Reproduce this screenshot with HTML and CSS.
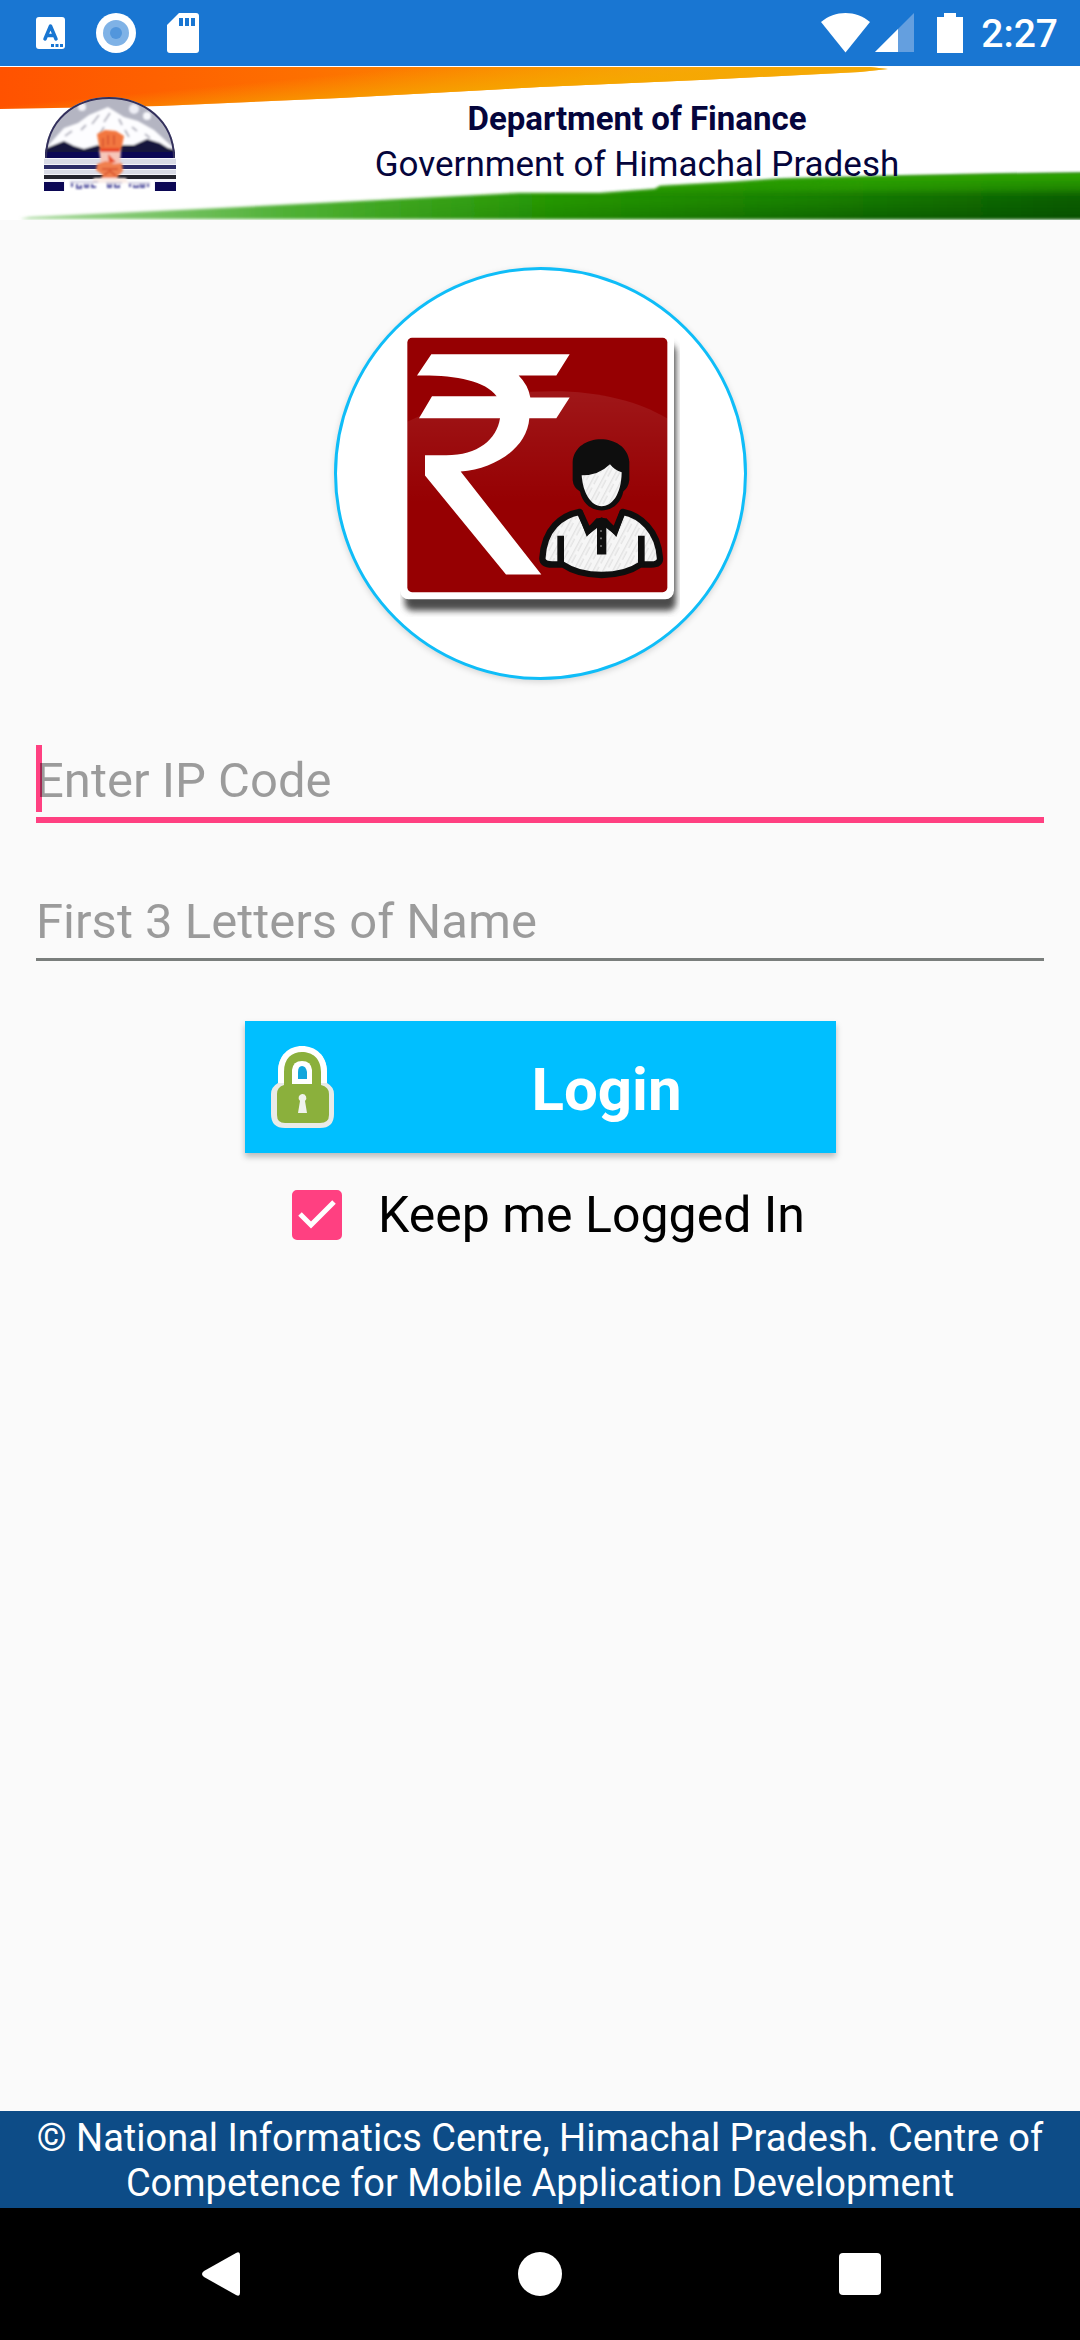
FILE: index.html
```html
<!DOCTYPE html>
<html lang="en">
<head>
    <meta charset="UTF-8">
    <meta name="viewport" content="width=device-width, initial-scale=1.0">
    <title>Login</title>
    <link rel="stylesheet" href="styles.css">
</head>
<body>
    <div class="status-bar">
        <div class="status-left">
            <svg width="29" height="32" viewBox="0 0 29 32">
                <rect width="29" height="32" rx="3" fill="#fff"/>
                <path d="M9 22 L14.500 9 L20 22 M11 18.500 H18" fill="none" stroke="#1976d2" stroke-width="3.500" stroke-linecap="round" stroke-linejoin="round"/>
                <path d="M15 27h3v3h-3z M19.500 27h3v3h-3z M24 27h3v3h-3z" fill="#1976d2"/>
            </svg>
            <svg width="40" height="40" viewBox="0 0 40 40">
                <circle cx="20" cy="20" r="20" fill="#fff"/>
                <circle cx="20" cy="20" r="13" fill="#7fb2e6"/>
                <circle cx="20" cy="20" r="6" fill="#5296dc"/>
            </svg>
            <svg width="32" height="40" viewBox="0 0 32 40">
                <path d="M12 0H29a3 3 0 0 1 3 3V37a3 3 0 0 1-3 3H3a3 3 0 0 1-3-3V12z" fill="#fff"/>
                <path d="M12 5h4v8h-4z M18 5h4v8h-4z M24 5h4v8h-4z" fill="#1976d2"/>
            </svg>
        </div>
        <div class="status-right">
            <svg width="49" height="40" viewBox="0 0 49 40">
                <path d="M0 9C14-3 35-3 49 9L24.500 39.500z" fill="#fff"/>
            </svg>
            <svg class="signal" width="39" height="40" viewBox="0 0 39 40">
                <path d="M39 0V39H0z" fill="#649fdf"/>
                <path d="M23 16V39H0z" fill="#fff"/>
            </svg>
            <svg class="battery" width="26" height="40" viewBox="0 0 26 40">
                <path d="M7 0H19V4H26V40H0V4H7z" fill="#fff"/>
            </svg>
            <span class="clock">2:27</span>
        </div>
    </div>

    <header class="banner">
        <svg class="banner-bg" viewBox="0 0 1080 154" preserveAspectRatio="none">
            <defs>
                <linearGradient id="saffron" x1="0" x2="1" y1="0" y2="0">
                    <stop offset="0" stop-color="#ff5200"/>
                    <stop offset=".35" stop-color="#fd7000"/>
                    <stop offset=".65" stop-color="#fb9200"/>
                    <stop offset="1" stop-color="#fbc050"/>
                </linearGradient>
                <linearGradient id="saffronEdge" gradientUnits="userSpaceOnUse" x1="300" y1="12" x2="303" y2="44">
                    <stop offset="0" stop-color="#f5a800" stop-opacity="0"/>
                    <stop offset="1" stop-color="#f5a800" stop-opacity=".9"/>
                </linearGradient>
                <linearGradient id="green" x1="0" x2="1" y1="0" y2="0">
                    <stop offset="0" stop-color="#a5d89a"/>
                    <stop offset=".25" stop-color="#4fb035"/>
                    <stop offset=".5" stop-color="#279a02"/>
                    <stop offset=".75" stop-color="#1c8400"/>
                    <stop offset="1" stop-color="#0a5c00"/>
                </linearGradient>
                <linearGradient id="greenShade" x1="0" x2="0" y1="0" y2="1">
                    <stop offset="0" stop-color="#2fa800"/>
                    <stop offset=".35" stop-color="#2fa800" stop-opacity=".5"/>
                    <stop offset=".6" stop-color="#064a00" stop-opacity=".1"/>
                    <stop offset="1" stop-color="#064000" stop-opacity=".5"/>
                </linearGradient>
                <linearGradient id="fadeIn" x1="0" x2="1" y1="0" y2="0">
                    <stop offset=".3" stop-color="#000"/>
                    <stop offset=".8" stop-color="#fff"/>
                </linearGradient>
                <mask id="shadeMask"><rect width="1080" height="154" fill="url(#fadeIn)"/></mask>
                <filter id="soft" x="-5%" y="-20%" width="110%" height="140%"><feGaussianBlur stdDeviation="1.500"/></filter>
            </defs>
            <rect width="1080" height="154" fill="#fff"/>
            <path d="M0 1H870L888 3L860 6L700 14L540 21L340 32L160 40L0 43z" fill="url(#saffron)"/>
            <path d="M0 1H870L888 3L860 6L700 14L540 21L340 32L160 40L0 43z" fill="url(#saffronEdge)"/>
            <path d="M20 153L30 151L200 143L380 134L520 127L600 127L655 123L660 120L735 116L780 113L900 110L1000 108L1090 107V153z" fill="url(#green)" filter="url(#soft)"/>
            <g mask="url(#shadeMask)">
                <path d="M20 153L30 151L200 143L380 134L520 127L600 127L655 123L660 120L735 116L780 113L900 110L1000 108L1090 107V153z" fill="url(#greenShade)" filter="url(#soft)"/>
            </g>
        </svg>
        <svg class="emblem" viewBox="0 0 132 95">
            <defs>
                <clipPath id="dome"><path d="M1 62C1 24 30 1 65 1S131 24 131 62z"/></clipPath>
                <filter id="smudge" x="-10%" y="-10%" width="120%" height="120%"><feGaussianBlur stdDeviation=".8"/></filter>
            </defs>
            <rect y="62" width="132" height="33" fill="#f4f4fa"/>
            <g clip-path="url(#dome)">
                <rect width="132" height="62" fill="#b4b5c2"/>
                <g filter="url(#smudge)">
                    <path d="M0 54L20 32L34 27L45 19L64 11L80 21L94 25L110 34L132 54V62H0z" fill="#fdfdff"/>
                    <circle cx="38" cy="11" r="4" fill="#f3f3f8"/>
                    <circle cx="90" cy="13" r="5" fill="#eeeef5"/>
                    <circle cx="103" cy="20" r="4" fill="#f8f8fc"/>
                    <path d="M55 19l-7 9M66 17l-6 9M42 29l-5 5M75 23l3 6M88 31l5 4M60 31l-4 7M101 38l5 4M28 35l-7 5M81 34l4 7" stroke="#b4b4c0" stroke-width="2"/>
                    <path d="M0 53L10 49L20 45L30 50L40 53L54 49H80L90 49L103 43L116 47L124 52L132 54V62H0z" fill="#14143c"/>
                </g>
                <path d="M0 56H132V62H0z" fill="#0b0754"/>
                <path d="M1 62C1 24 30 1 65 1S131 24 131 62" fill="none" stroke="#33305c" stroke-width="4"/>
            </g>
            <path d="M0 63H132V68H0z M0 74H132V78H0z" fill="#d9dbe6"/>
            <path d="M0 69H132V73H0z" fill="#2c2c68"/>
            <path d="M0 79H132V83H0z" fill="#24242e"/>
            <path d="M0 86H20V95H0z M111 86H132V95H111z" fill="#0b0754"/>
            <path d="M21 84H110V95H21z" fill="#fff"/>
            <g filter="url(#smudge)">
                <path d="M53 38L61 34L72 35L80 40L77 55H56z" fill="#f27740"/>
                <path d="M55 54H77L76 69H57z" fill="#f6c6b9"/>
                <path d="M56 52H76V56H56z M64 58l8 8-7 1z" fill="#e94b25"/>
                <path d="M53 68L62 65L70 68L78 67L79 75L73 81L76 84H55L59 79L52 74z" fill="#f0804f"/>
                <path d="M50 82H82L84 87H48z" fill="#fbeee8"/>
                <path d="M64 39V49M70 39V49M59 42V51M58 73H74M60 79L66 75L72 80" fill="none" stroke="#dc5830" stroke-width="2"/>
                <path d="M26 86H54M62 87H78M84 87H106" stroke="#a09ec4" stroke-width="1"/>
                <path d="M28 87v4M33 88v4h4v-3M41 88v3h3v-3M48 88v3h4M64 88v3h3v-3M71 88v3h4v-2M86 88v3M90 89v2h4v-2M97 88v3h3v-3M104 88v3" fill="none" stroke="#5552a0" stroke-width="2"/>
            </g>
        </svg>
        <div class="banner-text">
            <h1>Department of Finance</h1>
            <p>Government of Himachal Pradesh</p>
        </div>
    </header>

    <main class="content">
        <div class="logo">
            <svg width="280" height="287" viewBox="240 240 840 860">
                <defs>
                    <linearGradient id="gloss" x1="0" x2="0" y1="0" y2="1">
                        <stop offset="0" stop-color="#fff" stop-opacity=".09"/>
                        <stop offset="1" stop-color="#fff" stop-opacity="0"/>
                    </linearGradient>
                    <filter id="drop"><feGaussianBlur stdDeviation="9"/></filter>
                    <pattern id="pencil" width="26" height="40" patternUnits="userSpaceOnUse" patternTransform="rotate(28)">
                        <rect width="26" height="40" fill="#f6f6f6"/>
                        <path d="M5 0V40M15 6V34" stroke="#e2e2e2" stroke-width="4"/>
                    </pattern>
                </defs>
                <rect x="254" y="282" width="814" height="800" rx="24" fill="#4c4c4c" filter="url(#drop)"/>
                <rect x="240" y="240" width="822" height="807" rx="26" fill="#fff"/>
                <rect x="262" y="263" width="780" height="763" rx="14" fill="#960002"/>
                <path d="M262 515C400 445 560 423 700 423C840 423 960 455 1042 505V760H262z" fill="url(#gloss)"/>
                <path d="M334 312H749L709 376H596Q625 405 631 442H749L709 504H628C622 590 530 656 422 664L664 973H558L315 676V615H370C470 618 530 570 540 504H297L336 438H530C495 390 400 374 291 376z" fill="#fff"/>
                <!-- employee -->
                <path d="M779 785C725 795 672 835 667 925Q668 944 700 943H728C790 985 900 985 962 943H994Q1020 943 1020 925C1015 840 960 795 908 785L885 842L845 810L805 842z" fill="url(#pencil)" stroke="#0e0e0e" stroke-width="19" stroke-linejoin="round"/>
                <path d="M794 772L810 815L845 802L880 815L898 772z" fill="#960002"/>
                <path d="M779 782L803 845L833 812H856L886 845L908 782" fill="none" stroke="#0e0e0e" stroke-width="16"/>
                <path d="M831 812Q845 792 859 812V913H831z" fill="#0e0e0e"/>
                <path d="M722 857V948M964 857V948" stroke="#0e0e0e" stroke-width="20"/>
                <path d="M758 690V635C765 545 920 545 928 635V690Q925 712 910 724C895 800 795 800 780 724Q760 712 758 690z" fill="#0e0e0e"/>
                <path d="M785 675Q835 676 870 642Q884 660 905 666C904 735 875 768 845 768C812 768 788 725 785 675z" fill="url(#pencil)"/>
                <path d="M843 840v5M843 862v5M843 885v5" stroke="#888" stroke-width="5"/>
            </svg>
        </div>

        <form class="login-form">
            <div class="field field-active">
                <input type="text" id="ipcode" name="ipcode" placeholder="Enter IP Code" aria-label="Enter IP Code">
            </div>
            <div class="field">
                <input type="text" id="name" name="name" placeholder="First 3 Letters of Name" aria-label="First 3 Letters of Name">
            </div>

            <button type="submit" class="login-btn">
                <svg width="64" height="83" viewBox="0 0 64 83">
                    <path d="M7 37V26C7 9 18 1 31 1S56 9 56 26V37Q63 41 63 48V68Q63 82 49 82H14Q0 82 0 68V48Q0 41 7 37z" fill="#e9ebe8"/>
                    <path d="M7 37V26C7 9 18 0 31 0S56 9 56 26V37z" fill="#fff"/>
                    <path d="M13 39V26C13 12 21 6 31 6S50 12 50 26V39Q58 41 58 48V69Q58 77 49 77H14Q6 77 6 69V48Q6 41 13 39z" fill="#8bb03c"/>
                    <path d="M21 38V24Q22 15 31 15T41 24V38z" fill="#fff"/>
                    <path d="M27 33V26Q27 20 31 20T36 26V33z" fill="#12a6dc"/>
                    <path d="M31 48a4 4 0 0 1 3 7L36 67H27L29 55a4 4 0 0 1 2-7z" fill="#f0f2ec"/>
                </svg>
                <span>Login</span>
            </button>

            <label class="keep" for="keep">
                <span class="check">
                    <input type="checkbox" id="keep" name="keep" checked>
                    <svg width="50" height="50" viewBox="0 0 50 50">
                        <path d="M8 24L19 35L42 12" fill="none" stroke="#fff" stroke-width="5"/>
                    </svg>
                </span>
                Keep me Logged In
            </label>
        </form>
    </main>

    <footer class="footer">© National Informatics Centre, Himachal Pradesh. Centre of Competence for Mobile Application Development</footer>

    <nav class="nav-bar">
        <button type="button" aria-label="Back">
            <svg width="44" height="46" viewBox="0 0 44 46"><path d="M42 4V42Q42 46 38 44L6 26Q2 23 6 20L38 2Q42 0 42 4z" fill="#fff"/></svg>
        </button>
        <button type="button" aria-label="Home">
            <svg width="44" height="46" viewBox="0 0 44 46"><circle cx="22" cy="23" r="22" fill="#fff"/></svg>
        </button>
        <button type="button" aria-label="Recent apps">
            <svg width="44" height="46" viewBox="0 0 44 46"><rect x="1" y="2" width="42" height="42" rx="4" fill="#fff"/></svg>
        </button>
    </nav>
</body>
</html>
```
FILE: styles.css
```css
* {
    box-sizing: border-box;
}
body {
    margin: 0;
    min-height: 100vh;
    display: flex;
    flex-direction: column;
    background-color: #fafafa;
    font-family: Roboto, sans-serif;
}
svg {
    display: block;
    flex-shrink: 0;
}

/* status bar */
.status-bar {
    height: 66px;
    padding: 0 22px 0 36px;
    display: flex;
    align-items: center;
    justify-content: space-between;
    background-color: #1976d2;
}
.status-left {
    display: flex;
    align-items: center;
    gap: 31px;
}
.status-right {
    display: flex;
    align-items: center;
}
.signal {
    margin-left: 5px;
}
.battery {
    margin: 0 18px 0 23px;
}
.clock {
    padding-top: 2px;
    color: #fff;
    font-size: 39px;
    font-weight: 500;
    line-height: 46px;
}

/* department banner */
.banner {
    position: relative;
    height: 154px;
    padding-left: 44px;
    display: flex;
    align-items: center;
    color: #05053c;
}
.banner-bg {
    position: absolute;
    top: 0;
    left: 0;
    width: 100%;
    height: 100%;
}
.emblem {
    position: relative;
    width: 132px;
    height: 95px;
}
.banner-text {
    position: relative;
    flex: 1;
    margin-left: 18px;
    padding-bottom: 2px;
    text-align: center;
}
.banner-text h1 {
    margin: 0;
    font-size: 33px;
    font-weight: bold;
    line-height: 46px;
}
.banner-text p {
    margin: 0;
    font-size: 35px;
    line-height: 46px;
}

/* login */
.content {
    flex: 1;
    padding: 47px 36px 0;
    display: flex;
    flex-direction: column;
    align-items: center;
}
.logo {
    width: 413px;
    height: 413px;
    display: flex;
    align-items: center;
    justify-content: center;
    background-color: #fff;
    border: 3px solid #0fbdf8;
    border-radius: 50%;
    box-shadow: 0 2px 6px rgba(0,0,0,0.15);
}
.login-form {
    width: 100%;
    padding-top: 67px;
    display: flex;
    flex-direction: column;
    align-items: center;
}
.field {
    position: relative;
    width: 100%;
    margin-bottom: 60px;
    padding-bottom: 3px;
    border-bottom: 3px solid #7a7e7c;
}
.field-active {
    margin-bottom: 65px;
    border-bottom: 6px solid #ff4081;
}
.field-active::before {
    content: "";
    position: absolute;
    top: -2px;
    left: 0;
    width: 6px;
    height: 67px;
    background-color: #ff4081;
}
.field input {
    position: relative;
    display: block;
    width: 100%;
    height: 67px;
    padding: 0;
    border: none;
    outline: none;
    background: transparent;
    font-family: inherit;
    font-size: 49px;
    color: #000;
}
.field input::placeholder {
    color: rgba(0,0,0,0.38);
    opacity: 1;
}
.login-btn {
    width: 591px;
    height: 132px;
    padding: 0 26px;
    display: flex;
    align-items: center;
    gap: 69px;
    border: none;
    background-color: #00bfff;
    box-shadow: 0 4px 6px rgba(0,0,0,0.25);
    color: #fff;
    font-family: inherit;
    font-size: 60px;
    font-weight: bold;
    cursor: pointer;
}
.login-btn span {
    flex: 1;
    padding-top: 4px;
    text-align: center;
}
.keep {
    margin-top: 36px;
    padding-left: 17px;
    display: flex;
    align-items: center;
    gap: 36px;
    color: #000;
    font-size: 50px;
    line-height: 52px;
}
.check {
    position: relative;
    width: 50px;
    height: 50px;
}
.check input {
    appearance: none;
    display: block;
    width: 50px;
    height: 50px;
    margin: 0;
    border: 5px solid #757575;
    border-radius: 5px;
}
.check input:checked {
    border-color: #ff4081;
    background-color: #ff4081;
}
.check svg {
    position: absolute;
    top: 0;
    left: 0;
    visibility: hidden;
    pointer-events: none;
}
.check input:checked + svg {
    visibility: visible;
}

/* footer and navigation */
.footer {
    padding: 5px 30px 2px;
    background-color: #0d4c87;
    color: #fff;
    font-size: 38px;
    line-height: 45px;
    text-align: center;
}
.nav-bar {
    height: 132px;
    padding: 0 198px;
    display: flex;
    align-items: center;
    justify-content: space-between;
    background-color: #000;
}
.nav-bar button {
    padding: 0;
    border: none;
    background: none;
}
```
